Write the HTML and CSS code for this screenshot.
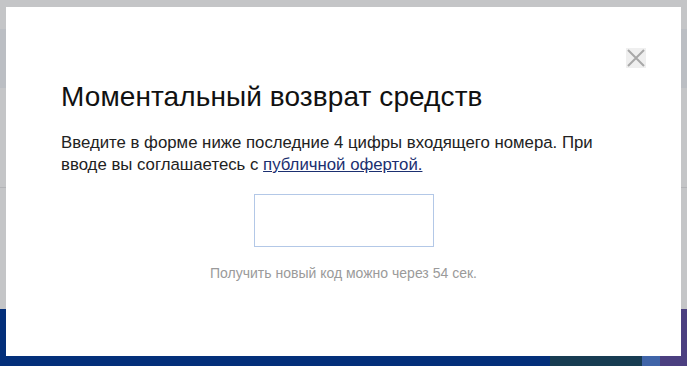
FILE: index.html
```html
<!DOCTYPE html>
<html lang="ru">
<head>
    <meta charset="UTF-8">
    <title>Моментальный возврат средств</title>
    <link rel="stylesheet" href="styles.css">
</head>
<body>
    <!-- Страница под затемнением -->
    <div class="page">
        <div class="topbar"></div>
        <div class="navbar"></div>
        <div class="content"></div>
        <div class="content-rest"></div>
        <div class="footer">
            <div class="footer-pic"></div>
            <div class="footer-tile"></div>
            <div class="footer-side"></div>
        </div>
    </div>

    <!-- Модальное окно -->
    <div class="modal">
        <button class="modal-close" type="button" aria-label="Закрыть">
            <svg width="20" height="20" viewBox="0 0 20 20">
                <path d="M2 2 L18 18 M18 2 L2 18" stroke="#a8a8a8" stroke-width="2" fill="none"/>
            </svg>
        </button>
        <h1 class="modal-title">Моментальный возврат средств</h1>
        <p class="modal-text">
            Введите в форме ниже последние 4 цифры входящего номера. При
            вводе вы соглашаетесь с <a href="#">публичной офертой.</a>
        </p>
        <div class="code-row">
            <input class="code-input" type="text" maxlength="4">
        </div>
        <div class="code-hint">Получить новый код можно через 54 сек.</div>
    </div>
</body>
</html>
```

FILE: styles.css
```css
body {
    margin: 0;
    background: #c4c5c7;
    font-family: "Liberation Sans", Arial, sans-serif;
    overflow: hidden;
}
.page {
    height: 366px;
    display: flex;
    flex-direction: column;
}
.topbar {
    height: 29px;
    background: #c4c5c7;
}
.navbar {
    height: 59px;
    background: #bbbec3;
}
.content {
    height: 99px;
    border-bottom: 1px solid #b3b4b7;
}
.content-rest {
    flex: 1;
}
.footer {
    height: 57px;
    background: #032f7a;
    display: flex;
    justify-content: flex-end;
}
.footer-pic {
    width: 92px;
    background: #173c52;
}
.footer-tile {
    width: 18px;
    background: #3f64a8;
}
.footer-side {
    width: 27px;
    background: #4b3f80;
}

/* модалка */
.modal {
    position: absolute;
    left: 6px;
    top: 7px;
    width: 675px;
    height: 349px;
    background: #fff;
    box-sizing: border-box;
    padding: 0 55px;
}
.modal-close {
    position: absolute;
    top: 41px;
    right: 35px;
    width: 20px;
    height: 20px;
    padding: 0;
    border: 0;
    background: #efefef;
    cursor: pointer;
}
.modal-close svg {
    display: block;
}
.modal-title {
    margin: 74px 0 0;
    font-size: 28px;
    line-height: 32px;
    font-weight: normal;
    color: #111;
    letter-spacing: 0.1px;
}
.modal-text {
    margin: 19px 0 0;
    font-size: 16.8px;
    line-height: 22px;
    color: #222;
}
.modal-text a {
    color: #1b2f70;
    text-decoration: underline;
}
.code-row {
    display: flex;
    justify-content: center;
    margin-top: 18px;
}
.code-input {
    width: 180px;
    height: 53px;
    box-sizing: border-box;
    border: 1px solid #b3c8e7;
    outline: none;
    font-size: 24px;
    text-align: center;
}
.code-hint {
    margin-top: 18px;
    text-align: center;
    font-size: 14px;
    color: #9a9a9a;
}
```
